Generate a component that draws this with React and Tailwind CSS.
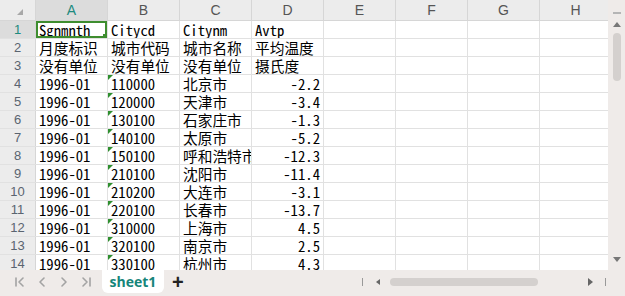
import React from 'react';

const cols = ['A', 'B', 'C', 'D', 'E', 'F', 'G', 'H'];

const rows = [
  ['Sgnmnth', 'Citycd', 'Citynm', 'Avtp'],
  ['月度标识', '城市代码', '城市名称', '平均温度'],
  ['没有单位', '没有单位', '没有单位', '摄氏度'],
  ['1996-01', '110000', '北京市', '-2.2'],
  ['1996-01', '120000', '天津市', '-3.4'],
  ['1996-01', '130100', '石家庄市', '-1.3'],
  ['1996-01', '140100', '太原市', '-5.2'],
  ['1996-01', '150100', '呼和浩特市', '-12.3'],
  ['1996-01', '210100', '沈阳市', '-11.4'],
  ['1996-01', '210200', '大连市', '-3.1'],
  ['1996-01', '220100', '长春市', '-13.7'],
  ['1996-01', '310000', '上海市', '4.5'],
  ['1996-01', '320100', '南京市', '2.5'],
  ['1996-01', '330100', '杭州市', '4.3'],
];

const cellFont = "font-['Noto_Sans_Mono_CJK_SC','Noto_Sans_CJK_SC',monospace]";

function Cell({ value, right, flag, selected }) {
  return (
    <div className="relative w-[72px] shrink-0 h-full border-r border-[#e1e1e1] px-[3px] overflow-hidden">
      {flag && (
        <div className="absolute left-0 top-0 w-0 h-0 border-t-[5px] border-r-[5px] border-t-[#2f8f2f] border-r-transparent" />
      )}
      <div className={`whitespace-nowrap text-[14.7px] leading-[18px] text-black ${right ? 'text-right' : ''} ${cellFont}`}>
        {value}
      </div>
      {selected && (
        <div className="absolute left-0 top-0 right-0 bottom-0 border-2 border-[#3e8d2f]">
          <div className="absolute -right-[3px] -bottom-[3px] w-[5px] h-[5px] bg-[#3e8d2f]" />
        </div>
      )}
    </div>
  );
}

function NavIcon({ d }) {
  return (
    <svg width="12" height="12" viewBox="0 0 12 12" fill="none" stroke="#a3a3a3" strokeWidth="1.6" strokeLinecap="round" strokeLinejoin="round">
      <path d={d} />
    </svg>
  );
}

export default function App() {
  return (
    <div className="w-[625px] h-[296px] flex flex-col bg-white overflow-hidden font-['Liberation_Sans',sans-serif]">
      <div className="flex h-[270px]">
        <div className="flex-1 overflow-hidden">
          {/* column headers */}
          <div className="flex h-[21px] bg-[#ececec] border-b border-[#d6d6d6]">
            <div className="w-[36px] shrink-0 border-r border-[#d6d6d6] flex items-center justify-center">
              <div className="w-0 h-0 border-l-[6px] border-b-[6px] border-l-transparent border-b-[#a8a8a8] ml-1 mt-1" />
            </div>
            {cols.map((c) => (
              <div
                key={c}
                className={`w-[72px] shrink-0 border-r border-[#d6d6d6] flex items-center justify-center text-[14px] ${
                  c === 'A' ? 'bg-[#dcdcdc] text-[#1d8a7e]' : 'text-[#555]'
                }`}
              >
                {c}
              </div>
            ))}
          </div>
          {rows.map((r, i) => (
            <div key={i} className="flex h-[18px] border-b border-[#e1e1e1]">
              <div
                className={`w-[36px] shrink-0 border-r border-[#d6d6d6] flex items-center justify-center text-[13px] ${
                  i === 0 ? 'bg-[#dcdcdc] text-[#1d8a7e]' : 'bg-[#ececec] text-[#5a6470]'
                }`}
              >
                {i + 1}
              </div>
              <Cell value={r[0]} selected={i === 0} />
              <Cell value={r[1]} flag={i >= 3} />
              <Cell value={r[2]} />
              <Cell value={r[3]} right={i >= 3} />
              <Cell />
              <Cell />
              <Cell />
              <Cell />
            </div>
          ))}
        </div>
        {/* vertical scrollbar */}
        <div className="w-[17px] shrink-0 bg-[#efebe9] flex flex-col items-center pt-[12px] pb-[8px]">
          <div className="w-[8px] h-[2px] bg-[#b5b5b5]" />
          <div className="mt-[8px] w-0 h-0 border-l-[4px] border-r-[4px] border-b-[5px] border-l-transparent border-r-transparent border-b-[#777]" />
          <div className="mt-[6px] w-[8px] h-[48px] rounded-full bg-[#d4d0ce]" />
          <div className="flex-1" />
          <div className="w-0 h-0 border-l-[4px] border-r-[4px] border-t-[5px] border-l-transparent border-r-transparent border-t-[#777]" />
        </div>
      </div>
      {/* sheet tab bar */}
      <div className="h-[26px] bg-[#efebe9] flex items-start">
        <div className="flex items-center h-[24px] pl-[14px] gap-[10px] w-[102px]">
          <NavIcon d="M2 2v8M9 2L5 6l4 4" />
          <NavIcon d="M8 2L4 6l4 4" />
          <NavIcon d="M4 2l4 4-4 4" />
          <NavIcon d="M3 2l4 4-4 4M10 2v8" />
        </div>
        <div className="w-[62px] h-[23px] bg-white rounded-b-[6px] flex items-center justify-center text-[14px] font-bold text-[#16857a] font-['Open_Sans',sans-serif]">
          sheet1
        </div>
        <div className="ml-[8px] h-[24px] flex items-center text-[20px] font-bold text-[#222] leading-none">+</div>
        <div className="flex-1" />
        <div className="flex items-center h-[24px] mr-[19px]">
          <div className="w-px h-[8px] bg-[#999]" />
          <div className="ml-[13px] w-0 h-0 border-t-[3px] border-b-[3px] border-r-[4px] border-t-transparent border-b-transparent border-r-[#666]" />
          <div className="ml-[10px] w-[148px] h-[8px] rounded-full bg-[#d4d0ce]" />
          <div className="ml-[50px] w-0 h-0 border-t-[4px] border-b-[4px] border-l-[5px] border-t-transparent border-b-transparent border-l-[#666]" />
          <div className="ml-[12px] w-px h-[8px] bg-[#999]" />
        </div>
      </div>
    </div>
  );
}
